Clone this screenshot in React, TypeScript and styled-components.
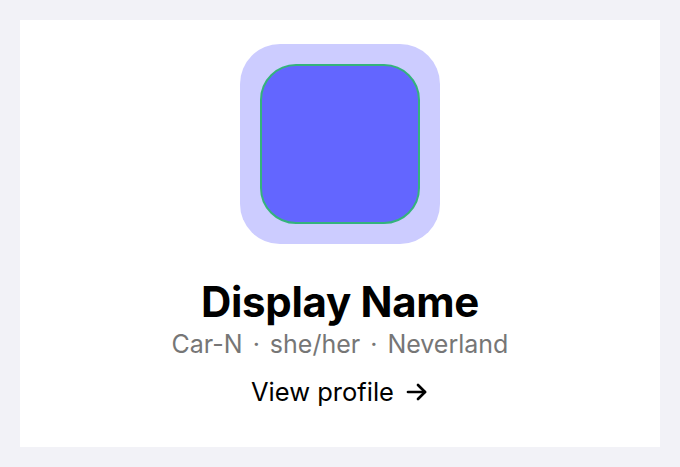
import React from "react";
import styled, { createGlobalStyle } from "styled-components";

const Global = createGlobalStyle`
  html, body { margin: 0; padding: 0; background: #f2f2f7; }
  body { font-family: Inter, "Noto Sans", sans-serif; }
`;

const Page = styled.div`
  padding: 20px;
`;

const Card = styled.div`
  background: #ffffff;
  height: 427px;
  box-sizing: border-box;
  padding-top: 24px;
  display: flex;
  flex-direction: column;
  align-items: center;
`;

const AvatarFrame = styled.div`
  width: 200px;
  height: 200px;
  box-sizing: border-box;
  padding: 20px;
  border-radius: 40px;
  background: #ccccff;
`;

const AvatarInner = styled.div`
  width: 100%;
  height: 100%;
  box-sizing: border-box;
  border-radius: 36px;
  background: #6366ff;
  border: 2px solid #34b37c;
`;

const Name = styled.h1`
  margin: 34px 0 0;
  font-size: 42px;
  line-height: 48px;
  font-weight: 700;
  color: #000;
  letter-spacing: -0.3px;
`;

const Meta = styled.div`
  margin-top: 2px;
  font-size: 25px;
  line-height: 32px;
  color: #767676;
`;

const Sep = styled.span`
  margin: 0 10px;
`;

const Link = styled.a`
  margin-top: 16px;
  display: flex;
  align-items: center;
  gap: 11px;
  font-size: 25.5px;
  line-height: 32px;
  color: #000;
  text-decoration: none;
`;

export default function App() {
  return (
    <>
      <Global />
      <Page>
        <Card>
          <AvatarFrame>
            <AvatarInner />
          </AvatarFrame>
          <Name>Display Name</Name>
          <Meta>
            Car-N<Sep>·</Sep>she/her<Sep>·</Sep>Neverland
          </Meta>
          <Link href="#">
            View profile
            <svg width="24" height="24" viewBox="0 0 24 24" fill="none" stroke="#000" strokeWidth="2.7" strokeLinecap="round" strokeLinejoin="round">
              <path d="M3 12h17" />
              <path d="M13 5l7 7-7 7" />
            </svg>
          </Link>
        </Card>
      </Page>
    </>
  );
}
